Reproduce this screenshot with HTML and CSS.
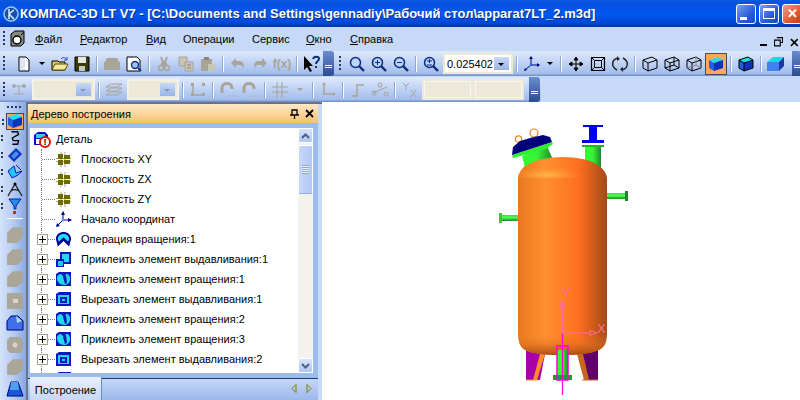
FILE: index.html
```html
<!DOCTYPE html>
<html lang="en">
<head>
    <meta charset="UTF-8">
    <title>КОМПАС-3D LT V7</title>
    <link rel="stylesheet" href="styles.css">
</head>
<body>

<svg class="defs" width="0" height="0">
    <symbol id="i-doc" viewBox="0 0 16 16"><path d="M3 1h7l3 3v11H3z" fill="#fff" stroke="#000"/><path d="M4 2h5v12H4z" fill="#dce8fa"/></symbol>
    <symbol id="i-open" viewBox="0 0 18 16"><path d="M1 14V5h6l1 1h6v8z" fill="#e8c860" stroke="#000"/><path d="M1 14l3-6h13l-3 6z" fill="#f4e8a0" stroke="#5a5000"/><path d="M10 3c2-2 4-2 5 0" fill="none" stroke="#2040c0"/><path d="M16 1v3h-3" fill="none" stroke="#2040c0"/></symbol>
    <symbol id="i-save" viewBox="0 0 16 16"><path d="M1 1h14v14H1z" fill="#3a3a10" stroke="#000"/><path d="M4 1h8v6H4z" fill="#e8e8d8"/><path d="M5 10h6v5H5z" fill="#c8c8b8"/></symbol>
    <symbol id="i-print" viewBox="0 0 18 16"><path d="M4 2h10l3 5v7H1V7z" fill="#a8a498"/></symbol>
    <symbol id="i-preview" viewBox="0 0 16 16"><path d="M1 1h10l3 3v11H1z" fill="#fff" stroke="#000"/><circle cx="9" cy="9" r="3.5" fill="#9cc4f0" stroke="#103090" stroke-width="1.4"/><path d="M12 12l3 3" stroke="#103090" stroke-width="2"/></symbol>
    <symbol id="i-cut" viewBox="0 0 12 16"><path d="M3 1l3 8 3-8M3 9l3-3 3 3" fill="none" stroke="#a8a498" stroke-width="2"/><circle cx="3" cy="12" r="2.4" fill="none" stroke="#a8a498" stroke-width="1.5"/><circle cx="9" cy="12" r="2.4" fill="none" stroke="#a8a498" stroke-width="1.5"/></symbol>
    <symbol id="i-copy" viewBox="0 0 16 16"><path d="M1 1h8v9H1z" fill="#c8c4b8" stroke="#a8a498"/><path d="M7 6h8v9H7z" fill="#c8c4b8" stroke="#a8a498"/><path d="M9 9h4M9 12h4" stroke="#8a867c"/></symbol>
    <symbol id="i-paste" viewBox="0 0 16 16"><path d="M1 3h11v12H1z" fill="#a8a498"/><path d="M4 1h5v3H4z" fill="#8a867c"/><path d="M8 8h7v7H8z" fill="#c8c4b8"/></symbol>
    <symbol id="i-undo" viewBox="0 0 16 14"><path d="M6 1L1 6l5 5V8h4c2 0 3 1 3 4 2-5 0-8-4-8H6z" fill="#a8a498"/></symbol>
    <symbol id="i-redo" viewBox="0 0 16 14"><path d="M10 1l5 5-5 5V8H6c-2 0-3 1-3 4-2-5 0-8 4-8h3z" fill="#a8a498"/></symbol>
    <symbol id="i-help" viewBox="0 0 18 18"><path d="M1 1v14l3-3 3 5 2-1-3-5h4z" fill="#000"/><path d="M10 4c1-3 6-3 6 0 0 2-3 2-3 5" fill="none" stroke="#103080" stroke-width="2"/><path d="M12 11h2v2h-2z" fill="#103080"/></symbol>
    <symbol id="i-zoom" viewBox="0 0 16 16"><circle cx="6.500" cy="6.500" r="5" fill="#b8d8f8" stroke="#102880" stroke-width="1.500"/><path d="M10 10l5 5" stroke="#102880" stroke-width="2.400"/></symbol>
    <symbol id="i-zoomin" viewBox="0 0 16 16"><use href="#i-zoom"/><path d="M4 6.500h5M6.500 4v5" stroke="#102880"/></symbol>
    <symbol id="i-zoomout" viewBox="0 0 16 16"><use href="#i-zoom"/><path d="M4 6.500h5" stroke="#102880"/></symbol>
    <symbol id="i-zoomfit" viewBox="0 0 16 16"><use href="#i-zoom"/><path d="M4 5h5M6.500 3v4M4 9h5" stroke="#102880"/></symbol>
    <symbol id="i-axes" viewBox="0 0 18 16"><path d="M8 1v8H16M8 9l-6 5" fill="none" stroke="#000080"/><path d="M8 0l-2 3h4zM17 9l-3-2v4zM1 15l1-3 2 2z" fill="#000080"/><path d="M7 8h2v2H7z" fill="#2060ff"/></symbol>
    <symbol id="i-move" viewBox="0 0 16 16"><path d="M8 1v14M1 8h14M8 1L6 4h4zM8 15l-2-3h4zM1 8l3-2v4zM15 8l-3-2v4z" fill="#000" stroke="#000"/></symbol>
    <symbol id="i-frame" viewBox="0 0 16 16"><path d="M1.500 1.500h13v13h-13z" fill="none" stroke="#000" stroke-width="1.200"/><path d="M4.500 4.500h7v7h-7zM1.500 1.500l3 3M14.500 1.500l-3 3M1.500 14.500l3-3M14.500 14.500l-3-3" fill="none" stroke="#000"/></symbol>
    <symbol id="i-rotate" viewBox="0 0 18 16"><path d="M7 2C3 3 1 6 2 10c1 2 2 3 4 4M11 14c4-1 6-4 5-8-1-2-2-3-4-4" fill="none" stroke="#222" stroke-width="1.500"/><path d="M6 0v5l3-2zM12 16v-5l-3 2z" fill="#222"/></symbol>
    <symbol id="i-wire" viewBox="0 0 16 16"><path d="M1 4l9-3 5 3v8l-9 3-5-3zM6 7l9-3M6 7v8M6 7L1 4" fill="none" stroke="#000"/></symbol>
    <symbol id="i-wirehid" viewBox="0 0 16 16"><use href="#i-wire"/><path d="M1 12l9-3 5 3M10 1v8" fill="none" stroke="#000"/></symbol>
    <symbol id="i-wiregrey" viewBox="0 0 16 16"><use href="#i-wire"/><path d="M1 12l9-3 5 3M10 1v8" fill="none" stroke="#8a867c"/></symbol>
    <symbol id="i-cube" viewBox="0 0 16 16"><path d="M1 4l9-3 5 3-9 3z" fill="#20e0e8"/><path d="M1 4l5 3v8l-5-3z" fill="#2060e0"/><path d="M6 7l9-3v8l-9 3z" fill="#1030c0"/></symbol>
    <symbol id="i-cubeline" viewBox="0 0 16 16"><use href="#i-cube"/><path d="M1 4l9-3 5 3v8l-9 3-5-3zM6 7l9-3M6 7v8M6 7L1 4" fill="none" stroke="#000"/></symbol>
    <symbol id="i-solid" viewBox="0 0 18 16"><path d="M0 6l6-5h11L12 6z" fill="#20d8e0"/><path d="M0 6h12v9H0z" fill="#4080f0"/><path d="M12 6l5-5v9l-5 5z" fill="#1838a8"/></symbol>
    <symbol id="i-node" viewBox="0 0 16 16"><path d="M1 4h14M8 4v8M3 12h10M3 2v4M13 2v4" fill="none" stroke="#a8a498"/><circle cx="3" cy="4" r="1.500" fill="none" stroke="#a8a498"/><circle cx="13" cy="4" r="1.500" fill="none" stroke="#a8a498"/></symbol>
    <symbol id="i-layers" viewBox="0 0 18 16"><path d="M1 5l5-3h11l-5 3zM1 9l5-3h11l-5 3zM1 13l5-3h11l-5 3z" fill="none" stroke="#a8a498"/></symbol>
    <symbol id="i-rect" viewBox="0 0 16 16"><path d="M3 2v11h11" fill="none" stroke="#a8a498" stroke-width="1.500"/><path d="M1 1h3v3H1zM12 11h3v3h-3zM12 1h3v3h-3zM1 11h3v3H1z" fill="#a8a498"/></symbol>
    <symbol id="i-magnet" viewBox="0 0 18 16"><path d="M3 11V6c0-6 10-6 10 0v1" fill="none" stroke="#a8a498" stroke-width="3"/><path d="M10 14h1M13 14h1M16 14h1" stroke="#a8a498"/></symbol>
    <symbol id="i-grid" viewBox="0 0 16 16"><path d="M0 5h16M0 10h16M5 0v16M10 0v16" stroke="#a8a498" fill="none"/></symbol>
    <symbol id="i-corner" viewBox="0 0 16 16"><path d="M4 1v11h11" fill="none" stroke="#a8a498" stroke-width="1.500"/><path d="M4 0L2 3h4zM16 12l-3-2v4z" fill="#a8a498"/></symbol>
    <symbol id="i-step" viewBox="0 0 16 16"><path d="M2 14h5V3h7" fill="none" stroke="#a8a498" stroke-width="1.500"/></symbol>
    <symbol id="i-link" viewBox="0 0 18 16"><path d="M2 11l14-6" stroke="#a8a498"/><circle cx="9" cy="3" r="2" fill="none" stroke="#a8a498"/><circle cx="3" cy="11" r="2" fill="none" stroke="#a8a498"/><circle cx="15" cy="12" r="2" fill="none" stroke="#a8a498"/></symbol>
    <symbol id="i-yx" viewBox="0 0 16 16"><path d="M1 1l3 3 3-3M4 4v4M9 8l5 7M14 8l-5 7" fill="none" stroke="#a8a498"/></symbol>
    <symbol id="i-plane" viewBox="0 0 17 17"><path d="M1 7.500h15M1 10.500h15M6 1v15M10 1v15" stroke="#a8a488"/><path d="M3 3h5v5H3zM9 4h6v4H9zM3 9h5v5H3zM9 9h6v4H9z" fill="#6e6a00"/></symbol>
    <symbol id="i-origin" viewBox="0 0 17 17"><path d="M8 1v8h8M8 9l-6 6" fill="none" stroke="#000080"/><path d="M8 0L6 4h4zM17 9l-4-2v4zM1 16l1-4 3 3z" fill="#000080"/><circle cx="8" cy="9" r="1.500" fill="#40a0ff"/></symbol>
    <symbol id="i-part" viewBox="0 0 16 17"><path d="M1 4l4-3h7l3 3v10H1z" fill="#0808c0"/><path d="M3 3h9v4H3z" fill="#20d8e8"/><path d="M3 8h6v5H3z" fill="#fff"/></symbol>
    <symbol id="i-rev" viewBox="0 0 18 17"><path d="M1 8c0-10 16-10 16 0l-2 8-6-6-6 6z" fill="#000090"/><path d="M3 8c0-7 12-7 12 0l-1 3-5-5-5 5z" fill="#20e0f8"/></symbol>
    <symbol id="i-ext" viewBox="0 0 17 17"><path d="M5 1h11v12H5z" fill="#0818c0"/><path d="M7 3h7v8H7z" fill="#20d8f0"/><path d="M1 8h8v8H1z" fill="#0818c0"/><path d="M3 10h5v5H3z" fill="#20c8f0"/></symbol>
    <symbol id="i-revadd" viewBox="0 0 17 17"><path d="M1 3l3-2h12v14H1z" fill="#0818c0"/><path d="M2 7c0-3 2-4 4-4l3 3 2-3c3 0 4 2 4 5 0 4-3 6-6 6-4 0-7-3-7-7z" fill="#20d8f0"/><path d="M8 6l3-2 1 8-2 1z" fill="#0818c0"/></symbol>
    <symbol id="i-cutext" viewBox="0 0 17 17"><path d="M1 3l3-2h12v14H1z" fill="#0818c0"/><path d="M3 4h11v9H3z" fill="#20d8f0"/><path d="M5 6h7v6H5z" fill="#0818c0"/><path d="M7 8h3v2H7z" fill="#20d8f0"/></symbol>
    <symbol id="i-gshape" viewBox="0 0 16 16"><path d="M1 6l5-5h9v9l-5 5H1z" fill="#aaa69a"/></symbol>
</svg>

<header class="titlebar">
    <svg class="app-logo" width="16" height="16" viewBox="0 0 16 16"><circle cx="8" cy="8" r="7" fill="#1450a8" stroke="#9cc8f0" stroke-width="1.500"/><path d="M6 3v10M6 8l5-4M6 8l5 5" stroke="#dceeff" stroke-width="1.500" fill="none"/></svg>
    <span class="title-text">КОМПАС-3D LT V7 - [C:\Documents and Settings\gennadiy\Рабочий стол\apparat7LT_2.m3d]</span>
    <div class="win-buttons">
        <div class="win-btn"><span class="glyph-min"></span></div>
        <div class="win-btn"><span class="glyph-max"></span></div>
        <div class="win-btn close">✕</div>
    </div>
</header>

<nav class="menubar">
    <span class="grip"></span>
    <svg class="doc-icon" width="17" height="18" viewBox="0 0 17 18"><path d="M2 4l4-3h9v12l-3 3H2z" fill="#8a8a80" stroke="#000"/><circle cx="8" cy="10" r="4" fill="#fff" stroke="#000" stroke-width="1.500"/><path d="M12 5l3-3" stroke="#000"/></svg>
    <ul class="menu">
        <li class="w-45"><u>Ф</u>айл</li>
        <li class="w-66"><u>Р</u>едактор</li>
        <li class="w-37"><u>В</u>ид</li>
        <li class="w-69">Операции</li>
        <li class="w-54">Сервис</li>
        <li class="w-44"><u>О</u>кно</li>
        <li><u>С</u>правка</li>
    </ul>
    <div class="mdi-buttons">
        <span class="mdi-min"></span>
        <svg width="10" height="10" viewBox="0 0 10 10"><path d="M3 .5h6v5H7M.5 3h6v6h-6z" fill="none" stroke="#000" stroke-width="1.200"/></svg>
        <svg width="9" height="9" viewBox="0 0 9 9"><path d="M1 1l7 7M8 1L1 8" stroke="#000" stroke-width="1.600"/></svg>
    </div>
</nav>

<div class="toolrow row-std">
    <span class="grip"></span>
    <span class="tool t-first"><svg width="16" height="16"><use href="#i-doc"/></svg></span>
    <span class="caret"></span>
    <span class="tool"><svg width="18" height="16"><use href="#i-open"/></svg></span>
    <span class="tool"><svg width="16" height="16"><use href="#i-save"/></svg></span>
    <span class="sep"></span>
    <span class="tool"><svg width="18" height="16"><use href="#i-print"/></svg></span>
    <span class="tool"><svg width="16" height="16"><use href="#i-preview"/></svg></span>
    <span class="sep"></span>
    <span class="tool"><svg width="12" height="16"><use href="#i-cut"/></svg></span>
    <span class="tool"><svg width="16" height="16"><use href="#i-copy"/></svg></span>
    <span class="tool"><svg width="16" height="16"><use href="#i-paste"/></svg></span>
    <span class="sep"></span>
    <span class="tool"><svg width="16" height="14"><use href="#i-undo"/></svg></span>
    <span class="tool"><svg width="16" height="14"><use href="#i-redo"/></svg></span>
    <span class="tool fx">f(x)</span>
    <span class="sep"></span>
    <span class="tool"><svg width="18" height="18"><use href="#i-help"/></svg></span>
    <span class="chevron"></span>
    <span class="grip"></span>
    <span class="tool"><svg width="16" height="16"><use href="#i-zoom"/></svg></span>
    <span class="tool"><svg width="16" height="16"><use href="#i-zoomin"/></svg></span>
    <span class="tool"><svg width="16" height="16"><use href="#i-zoomout"/></svg></span>
    <span class="sep"></span>
    <span class="tool"><svg width="16" height="16"><use href="#i-zoomfit"/></svg></span>
    <div class="scale-combo"><span class="scale-value">0.025402</span><span class="combo-btn dark"></span></div>
    <span class="sep"></span>
    <span class="tool"><svg width="18" height="16"><use href="#i-axes"/></svg></span>
    <span class="caret"></span>
    <span class="sep"></span>
    <span class="tool"><svg width="16" height="16"><use href="#i-move"/></svg></span>
    <span class="tool"><svg width="16" height="16"><use href="#i-frame"/></svg></span>
    <span class="tool"><svg width="18" height="16"><use href="#i-rotate"/></svg></span>
    <span class="sep"></span>
    <span class="tool"><svg width="16" height="16"><use href="#i-wire"/></svg></span>
    <span class="tool"><svg width="16" height="16"><use href="#i-wirehid"/></svg></span>
    <span class="tool"><svg width="16" height="16"><use href="#i-wiregrey"/></svg></span>
    <span class="tool active"><svg width="16" height="16"><use href="#i-cube"/></svg></span>
    <span class="sep"></span>
    <span class="tool"><svg width="16" height="16"><use href="#i-cubeline"/></svg></span>
    <span class="sep"></span>
    <span class="tool"><svg width="18" height="16"><use href="#i-solid"/></svg></span>
    <span class="chevron end"></span>
</div>

<div class="toolrow row-params">
    <span class="grip"></span>
    <span class="tool"><svg width="16" height="16"><use href="#i-node"/></svg></span>
    <div class="combo c-63"><span class="combo-btn"></span></div>
    <span class="sep"></span>
    <span class="tool"><svg width="18" height="16"><use href="#i-layers"/></svg></span>
    <div class="combo c-52"><span class="combo-btn"></span></div>
    <span class="sep"></span>
    <span class="tool"><svg width="16" height="16"><use href="#i-rect"/></svg></span>
    <span class="sep"></span>
    <span class="tool"><svg width="18" height="16"><use href="#i-magnet"/></svg></span>
    <span class="tool"><svg width="18" height="16"><use href="#i-magnet"/></svg></span>
    <span class="sep"></span>
    <span class="tool"><svg width="16" height="16"><use href="#i-grid"/></svg></span>
    <span class="caret grey"></span>
    <span class="sep"></span>
    <span class="tool"><svg width="16" height="16"><use href="#i-corner"/></svg></span>
    <span class="sep"></span>
    <span class="tool"><svg width="16" height="16"><use href="#i-step"/></svg></span>
    <span class="tool"><svg width="18" height="16"><use href="#i-link"/></svg></span>
    <span class="sep"></span>
    <span class="tool"><svg width="16" height="16"><use href="#i-yx"/></svg></span>
    <div class="fields"><span class="field"></span><span class="field"></span></div>
    <span class="chevron"></span>
</div>

<main class="workspace">
    <aside class="sidebar">
        <span class="grip-h"></span>
        <span class="side-tool active"><svg width="16" height="16"><use href="#i-cube"/></svg></span>
        <span class="side-tool"><svg width="14" height="16" viewBox="0 0 14 18"><path d="M3 2h7l1 3-7 4 1 3h6l-1 4H4" fill="none" stroke="#000" stroke-width="1.500"/></svg></span>
        <span class="side-tool"><svg width="16" height="16" viewBox="0 0 16 16"><path d="M1 9l8-8 6 6-8 8z" fill="#1030c0"/><path d="M4 9l5-5 3 3-5 5z" fill="#4090f0"/></svg></span>
        <span class="side-tool"><svg width="16" height="16" viewBox="0 0 16 16"><path d="M1 7l4 7 6-3 4-4-6 2-2-7z" fill="#20c8f0" stroke="#0818c0"/><path d="M9 1l5 5" stroke="#0818c0"/></svg></span>
        <span class="side-tool"><svg width="16" height="16" viewBox="0 0 16 16"><path d="M1 15L8 3l7 12M4 10c3-2 5-2 8 0" fill="none" stroke="#222" stroke-width="1.300"/><circle cx="8" cy="3" r="1.500" fill="#000"/></svg></span>
        <span class="side-tool"><svg width="14" height="16" viewBox="0 0 14 16"><path d="M1 1h12L8 8v3H6V8z" fill="#2090e0" stroke="#0818c0"/><path d="M5 13h3v3H5z" fill="#e02020"/></svg></span>
        <span class="side-sep"></span>
        <span class="side-tool big"><svg width="18" height="18"><use href="#i-gshape"/></svg></span>
        <span class="side-tool big"><svg width="18" height="18"><use href="#i-gshape"/></svg></span>
        <span class="side-tool big"><svg width="18" height="18"><use href="#i-gshape"/></svg></span>
        <span class="side-tool big"><svg width="16" height="16" viewBox="0 0 16 16"><path d="M0 0h16v16H0z" fill="#aaa69a"/><path d="M6 6h5v4H6z" fill="#d8d4c8"/></svg></span>
        <span class="side-tool big"><svg width="18" height="18" viewBox="0 0 18 18"><path d="M1 7l4-5h7l5 5v9H1z" fill="#4070e8" stroke="#000080"/><path d="M10 2l6 5-5 2z" fill="#a8d8f8"/></svg></span>
        <span class="side-tool big"><svg width="16" height="16" viewBox="0 0 16 16"><path d="M3 0h10l3 3v10l-3 3H3l-3-3V3z" fill="#aaa69a"/><circle cx="8" cy="8" r="2.500" fill="#d8d4c8"/></svg></span>
        <span class="side-tool big"><svg width="18" height="18"><use href="#i-gshape"/></svg></span>
        <span class="side-tool big"><svg width="18" height="18" viewBox="0 0 18 18"><path d="M1 16L5 2h7l5 14z" fill="#1858d8" stroke="#000080"/><path d="M5 2h7l1 8H4z" fill="#50a0f0"/></svg></span>
    </aside>

    <section class="panel">
        <div class="panel-head">
            <span class="panel-title">Дерево построения</span>
            <svg width="9" height="10" viewBox="0 0 9 10"><path d="M2 1h5v5H2zM0 6h9M4.500 6v4" fill="none" stroke="#000" stroke-width="1.300"/></svg>
            <svg width="9" height="9" viewBox="0 0 9 9"><path d="M1 1l7 7M8 1L1 8" stroke="#000" stroke-width="1.800"/></svg>
        </div>
        <div class="panel-body">
            <ul class="tree">
                <li class="tree-row root">
                    <span class="root-icon"><svg width="16" height="17"><use href="#i-part"/></svg><span class="warn">!</span></span>
                    <span class="label root-label">Деталь</span>
                </li>
                <li class="tree-row"><span class="guide"></span><svg width="17" height="17"><use href="#i-plane"/></svg><span class="label">Плоскость XY</span></li>
                <li class="tree-row"><span class="guide"></span><svg width="17" height="17"><use href="#i-plane"/></svg><span class="label">Плоскость ZX</span></li>
                <li class="tree-row"><span class="guide"></span><svg width="17" height="17"><use href="#i-plane"/></svg><span class="label">Плоскость ZY</span></li>
                <li class="tree-row"><span class="guide"></span><svg width="17" height="17"><use href="#i-origin"/></svg><span class="label">Начало координат</span></li>
                <li class="tree-row"><span class="guide"><span class="plus"></span></span><svg width="17" height="17"><use href="#i-rev"/></svg><span class="label">Операция вращения:1</span></li>
                <li class="tree-row"><span class="guide"><span class="plus"></span></span><svg width="17" height="17"><use href="#i-ext"/></svg><span class="label">Приклеить элемент выдавливания:1</span></li>
                <li class="tree-row"><span class="guide"><span class="plus"></span></span><svg width="17" height="17"><use href="#i-revadd"/></svg><span class="label">Приклеить элемент вращения:1</span></li>
                <li class="tree-row"><span class="guide"><span class="plus"></span></span><svg width="17" height="17"><use href="#i-cutext"/></svg><span class="label">Вырезать элемент выдавливания:1</span></li>
                <li class="tree-row"><span class="guide"><span class="plus"></span></span><svg width="17" height="17"><use href="#i-revadd"/></svg><span class="label">Приклеить элемент вращения:2</span></li>
                <li class="tree-row"><span class="guide"><span class="plus"></span></span><svg width="17" height="17"><use href="#i-revadd"/></svg><span class="label">Приклеить элемент вращения:3</span></li>
                <li class="tree-row"><span class="guide"><span class="plus"></span></span><svg width="17" height="17"><use href="#i-cutext"/></svg><span class="label">Вырезать элемент выдавливания:2</span></li>
                <li class="tree-row"><span class="guide"></span><svg width="17" height="17"><use href="#i-revadd"/></svg></li>
            </ul>
            <div class="scrollbar">
                <span class="sb-btn"><svg width="9" height="6" viewBox="0 0 9 6"><path d="M1 5l3.500-3.500L8 5" fill="none" stroke="#4d6185" stroke-width="2"/></svg></span>
                <span class="sb-thumb"><span class="sb-lines"></span></span>
                <span class="sb-btn sb-down"><svg width="9" height="6" viewBox="0 0 9 6"><path d="M1 1l3.500 3.500L8 1" fill="none" stroke="#4d6185" stroke-width="2"/></svg></span>
            </div>
        </div>
        <div class="panel-tabs">
            <span class="tab">Построение</span>
            <span class="tab-arrows">
                <svg width="6" height="9" viewBox="0 0 6 9"><path d="M5 .5v8L1 4.500z" fill="none" stroke="#7c8000"/></svg>
                <svg width="6" height="9" viewBox="0 0 6 9"><path d="M1 .5v8l4-4z" fill="none" stroke="#7c8000"/></svg>
            </span>
        </div>
    </section>

    <div class="viewport">
        <svg class="model" width="478" height="298" viewBox="322 102 478 298">
            <defs>
                <linearGradient id="g-body" x1="0" x2="1" y1="0" y2="0">
                    <stop offset="0" stop-color="#e8781e"/>
                    <stop offset=".3" stop-color="#ff9030"/>
                    <stop offset=".68" stop-color="#ff6e20"/>
                    <stop offset="1" stop-color="#a24a18"/>
                </linearGradient>
                <linearGradient id="g-bottom" x1="0" x2="0" y1="0" y2="1">
                    <stop offset="0" stop-color="#ff8a2c" stop-opacity="0"/>
                    <stop offset="1" stop-color="#a84c10"/>
                </linearGradient>
                <linearGradient id="g-green" x1="0" x2="1" y1="0" y2="0">
                    <stop offset="0" stop-color="#30ff30"/>
                    <stop offset=".5" stop-color="#38f038"/>
                    <stop offset="1" stop-color="#1a8a28"/>
                </linearGradient>
                <linearGradient id="g-pipe" x1="0" x2="0" y1="0" y2="1">
                    <stop offset="0" stop-color="#30e030"/>
                    <stop offset=".4" stop-color="#50ff50"/>
                    <stop offset="1" stop-color="#1a8a28"/>
                </linearGradient>
                <radialGradient id="g-dome" cx=".33" cy=".85" r=".4">
                    <stop offset="0" stop-color="#ffb848"/>
                    <stop offset="1" stop-color="#ff8c2c" stop-opacity="0"/>
                </radialGradient>
            </defs>
            <path d="M526 347L545 354 540 380H526z" fill="#a800a8"/>
            <path d="M540 354L545 354 537 380H533z" fill="#ff8c28"/>
            <path d="M526 380h12" stroke="#ff8c28"/>
            <path d="M598 347L582 354 586 380H598z" fill="#64006c"/>
            <path d="M577 354L583 354 589 380H584z" fill="#c8681c"/>
            <path d="M582 380h16" stroke="#c8681c"/>

            <path d="M585 145h16v22h-16z" fill="url(#g-green)"/>
            <path d="M582 145h22v2h-22z" fill="#20b030"/>
            <path d="M583 125h20v2h-20zM589 127h8v13h-8zM582 140h22v3h-22z" fill="#0000f0"/>

            <circle cx="518.500" cy="139" r="3.200" fill="none" stroke="#f08020" stroke-width="1.200"/>
            <circle cx="534" cy="133" r="4" fill="none" stroke="#f08020" stroke-width="1.200"/>
            <path d="M522 156l25-10 6 14-26 16z" fill="url(#g-green)"/>
            <path d="M513 158l-1-3 40-13 1 2-7 5z" fill="#30f030"/>
            <path d="M512 155l1-8 7-6 10-3 13-3 7 2 2 5z" fill="#00007c"/>

            <path d="M607 193h19v6h-19z" fill="url(#g-pipe)"/>
            <path d="M625 191h3v10h-3z" fill="#1a8a28"/>
            <path d="M499 215h19v6h-19z" fill="url(#g-pipe)"/>
            <path d="M499 213h3v10h-3z" fill="#30d030"/>

            <path d="M518 178c0-3 3-9 7-12 10-6 24-9 37-9 15 0 30 3 37 9 5 3 8 9 8 12v155c0 8-2 14-8 17-8 4-22 5-37 5-16 0-30-1-37-5-5-3-7-9-7-17z" fill="url(#g-body)"/>
            <path d="M518 178c0-3 3-9 7-12 10-6 24-9 37-9 15 0 30 3 37 9 5 3 8 9 8 12z" fill="url(#g-dome)"/>
            <path d="M518 334h89c0 8-2 13-8 16-8 4-22 5-37 5-16 0-30-1-37-5-5-3-7-8-7-16z" fill="url(#g-bottom)"/>

            <path d="M557 350h11v27h-11z" fill="url(#g-green)"/>
            <path d="M553 375h19v5h-19z" fill="#1c9c30"/>
            <path d="M557 346h11v34h-11z" fill="none" stroke="#ff00d8" stroke-width="1.500"/>
            <path d="M562.500 333v62" stroke="#ff00d8" stroke-width="1.200"/>
            <path d="M562.500 300v33H590" fill="none" stroke="#ff6e96" stroke-width="1.200"/>
            <path d="M562.500 300l-2.500 7h5zM597 333l-7-2.500v5z" fill="none" stroke="#ff6e96"/>
            <text class="axis-label" x="562" y="297">Y</text>
            <text class="axis-label" x="597" y="333">X</text>
        </svg>
    </div>
</main>

</body>
</html>
```

FILE: styles.css
```css
* {
    box-sizing: border-box;
}
html, body {
    margin: 0;
    padding: 0;
    width: 800px;
    height: 400px;
    overflow: hidden;
    background-color: #c6d9f6;
    font-family: "Liberation Sans", Arial, sans-serif;
    font-size: 11px;
    color: #000;
}
ul {
    list-style: none;
    margin: 0;
    padding: 0;
}
.defs {
    position: absolute;
}

/* title bar */
.titlebar {
    height: 27px;
    display: flex;
    align-items: center;
    padding-left: 3px;
    background: linear-gradient(to bottom, #0a5ce0 0%, #0a50e0 10%, #0058f0 50%, #0048d8 85%, #0036a8 100%);
}
.app-logo {
    flex: none;
    margin-right: 1px;
}
.title-text {
    flex: 1;
    color: #fff;
    font-family: "Liberation Sans", Arial, sans-serif;
    font-weight: bold;
    font-size: 13px;
    white-space: nowrap;
    text-shadow: 1px 1px 0 #0a2f90;
}
.win-buttons {
    display: flex;
    gap: 3px;
    width: 64px;
    flex: none;
}
.win-btn {
    width: 20px;
    height: 20px;
    flex: none;
    border: 1px solid #fff;
    border-radius: 3px;
    background: linear-gradient(135deg, #7aa0f0, #2a5cd8 60%, #1c48c0);
    display: flex;
    align-items: center;
    justify-content: center;
    color: #fff;
    font-size: 13px;
    font-weight: bold;
}
.win-btn.close {
    background: linear-gradient(135deg, #f0a080, #e05a30 60%, #c03c18);
}
.glyph-min {
    width: 7px;
    height: 3px;
    background-color: #fff;
    margin: 9px 6px 0 0;
}
.glyph-max {
    width: 12px;
    height: 11px;
    border: 1px solid #fff;
    border-top-width: 3px;
}

/* menu */
.menubar {
    height: 24px;
    display: flex;
    align-items: center;
    background-color: #c6d9f6;
}
.grip {
    flex: none;
    width: 2px;
    height: 16px;
    margin: 0 3px;
    background: repeating-linear-gradient(to bottom, #2a3a5c 0, #2a3a5c 2px, transparent 2px, transparent 4px);
}
.chevron + .grip {
    margin-right: 5px;
}
.doc-icon {
    margin: 0 9px 0 1px;
    flex: none;
}
.menu {
    display: flex;
    flex: 1;
}
.w-45 { width: 45px; }
.w-66 { width: 66px; }
.w-37 { width: 37px; }
.w-69 { width: 69px; }
.w-54 { width: 54px; }
.w-44 { width: 44px; }
.mdi-buttons {
    display: flex;
    align-items: center;
    gap: 7px;
    padding-right: 1px;
    margin-top: 6px;
    width: 40px;
}
.mdi-min {
    width: 7px;
    height: 2px;
    background-color: #000;
    margin-top: 5px;
}

/* toolbars */
.toolrow {
    height: 25px;
    display: flex;
    align-items: center;
    margin-bottom: 1px;
    background: linear-gradient(to bottom, #dfe9fb 0%, #c4d6f6 40%, #a3bdec 90%, #6d89c0 100%);
}
.row-std {
    width: 800px;
}
.row-params {
    width: 541px;
    border-top-right-radius: 4px;
    border-bottom-right-radius: 4px;
}
.tool {
    flex: none;
    width: 22px;
    height: 22px;
    display: flex;
    align-items: center;
    justify-content: center;
}
.t-first {
    margin-left: 5px;
}
.tool.active {
    background-color: #ffa85c;
    border: 1px solid #3c4a6c;
}
.fx {
    color: #a8a498;
    font-weight: bold;
    font-size: 12px;
}
.sep {
    flex: none;
    width: 2px;
    height: 16px;
    margin: 0 3px;
    background-color: #fff;
    border-left: 1px solid #8ea6d2;
}
.caret {
    flex: none;
    width: 0;
    height: 0;
    margin: 0 4px;
    border-top: 3px solid #000;
    border-left: 3px solid transparent;
    border-right: 3px solid transparent;
}
.caret.grey {
    margin: 0 6px;
    border-top-color: #a8a498;
}
.chevron {
    flex: none;
    width: 11px;
    height: 25px;
    margin-right: 2px;
    position: relative;
    background: linear-gradient(to bottom, #6a8cd0, #2c4c90);
    border-radius: 0 3px 3px 0;
}
.chevron::after {
    content: "";
    position: absolute;
    left: 2px;
    bottom: 5px;
    width: 7px;
    height: 6px;
    background: linear-gradient(to bottom, #fff 0, #fff 1px, transparent 1px, transparent 2px, #fff 2px, #fff 3px, transparent 3px);
}
.chevron.end {
    margin: 0 0 0 5px;
    width: 9px;
}
.scale-combo {
    flex: none;
    width: 70px;
    height: 21px;
    display: flex;
    align-items: center;
    margin-left: 1px;
    padding: 2px;
    background-color: #fff;
    border: 2px solid #ece9d8;
    font-size: 11px;
}
.scale-value {
    flex: 1;
}
.combo {
    flex: none;
    height: 21px;
    padding: 2px;
    margin-left: 2px;
    display: flex;
    justify-content: flex-end;
    background-color: #ece9d8;
    border: 2px solid #f4f2e8;
}
.c-63 { width: 63px; }
.c-52 { width: 52px; }
.combo-btn {
    flex: none;
    width: 15px;
    height: 100%;
    position: relative;
    background: linear-gradient(to bottom, #c8d8f8, #98b4e8);
}
.combo-btn::after {
    content: "";
    position: absolute;
    left: 4px;
    top: 6px;
    border-top: 3px solid #8a94ac;
    border-left: 3px solid transparent;
    border-right: 3px solid transparent;
}
.combo-btn.dark::after {
    border-top-color: #000;
}
.fields {
    flex: none;
    display: flex;
    gap: 4px;
    padding: 2px;
    width: 102px;
    height: 21px;
    margin: 0 5px 0 1px;
    background-color: #ece9d8;
}
.field {
    flex: 1;
    background-color: #ece9d8;
    border: 1px solid #f8f6ee;
}

/* main area */
.workspace {
    height: 298px;
    display: flex;
    margin-top: -1px;
}
.sidebar {
    flex: none;
    width: 26px;
    display: flex;
    flex-direction: column;
    align-items: center;
    background: linear-gradient(to right, #d4e2fa 0%, #b6ccf2 50%, #88a8e4 100%);
    padding: 4px 0 0 3px;
}
.grip-h {
    width: 16px;
    height: 2px;
    margin-bottom: 5px;
    background: repeating-linear-gradient(to right, #2a3a5c 0, #2a3a5c 2px, transparent 2px, transparent 4px);
}
.side-tool {
    flex: none;
    position: relative;
    width: 18px;
    height: 17px;
    display: flex;
    align-items: center;
    justify-content: center;
}
.side-tool:not(.big)::before {
    content: "";
    position: absolute;
    left: -5px;
    top: 5px;
    width: 2px;
    height: 6px;
    background: repeating-linear-gradient(to bottom, #2a3a5c 0, #2a3a5c 2px, transparent 2px, transparent 4px);
}
.side-tool.active {
    background-color: #ffa85c;
    border: 1px solid #3c4a6c;
}
.side-tool.big {
    height: 22px;
}
.side-sep {
    width: 16px;
    height: 2px;
    margin: 3px 0 5px;
    background-color: #fff;
}
.panel {
    flex: none;
    width: 296px;
    display: flex;
    flex-direction: column;
    padding-right: 4px;
    border-top: 2px solid #6b7486;
    border-left: 2px solid #6b7486;
}
.panel-head {
    height: 19px;
    flex: none;
    display: flex;
    align-items: center;
    gap: 6px;
    padding: 0 4px 0 3px;
    background: linear-gradient(to bottom, #fde9c8, #f8c070);
}
.panel-title {
    flex: 1;
}
.panel-body {
    flex: 1;
    min-height: 0;
    display: flex;
    padding: 5px 5px 5px 2px;
    background-color: #9cbcec;
}
.tree {
    flex: 1;
    min-width: 0;
    overflow: hidden;
    padding-top: 1px;
    background-color: #fff;
}
.tree-row {
    height: 20px;
    display: flex;
    align-items: center;
    white-space: nowrap;
}
.root {
    padding-left: 3px;
}
.root-icon {
    position: relative;
    display: flex;
    width: 20px;
}
.warn {
    position: absolute;
    left: 6px;
    top: 5px;
    width: 12px;
    height: 12px;
    border: 2px solid #e01010;
    border-radius: 50%;
    background-color: #fff;
    color: #000;
    font-size: 9px;
    font-weight: bold;
    line-height: 8px;
    text-align: center;
}
.guide {
    flex: none;
    position: relative;
    width: 14px;
    height: 20px;
    margin-left: 11px;
    border-left: 1px dotted #808080;
}
.guide::after {
    content: "";
    position: absolute;
    left: 0;
    right: 0;
    top: 10px;
    border-top: 1px dotted #808080;
}
.plus {
    position: absolute;
    z-index: 1;
    left: -5px;
    top: 5px;
    width: 11px;
    height: 11px;
    border: 1px solid #a5a092;
    background: linear-gradient(#000, #000) center / 7px 1px no-repeat, linear-gradient(#000, #000) center / 1px 7px no-repeat, #fff;
}
.label {
    margin-left: 9px;
}
.tree-row .root-label {
    margin-left: 3px;
}
.scrollbar {
    flex: none;
    width: 15px;
    display: flex;
    flex-direction: column;
    background-color: #f3f2ec;
}
.sb-btn {
    flex: none;
    height: 15px;
    display: flex;
    align-items: center;
    justify-content: center;
    background: linear-gradient(to bottom, #d8e4fb, #b0c6f4);
    border: 1px solid #fff;
    border-radius: 2px;
}
.sb-thumb {
    flex: none;
    height: 49px;
    margin-top: 2px;
    display: flex;
    align-items: center;
    justify-content: center;
    background: linear-gradient(to right, #c8d6fa, #b4c8f6);
    border: 1px solid #fff;
    border-bottom-color: #8eaee8;
    border-radius: 2px;
}
.sb-lines {
    width: 7px;
    height: 9px;
    background: repeating-linear-gradient(to bottom, #8da4d8 0, #8da4d8 1px, #eef2fc 1px, #eef2fc 2px);
}
.sb-down {
    margin-top: auto;
}
.panel-tabs {
    flex: none;
    height: 22px;
    display: flex;
    padding-left: 2px;
    border-top: 1px solid #1c3a78;
    background: linear-gradient(to bottom, #c4d6f6, #9cb8ec);
}
.tab {
    width: 72px;
    height: 23px;
    margin-top: -2px;
    padding-top: 7px;
    text-align: center;
    background: linear-gradient(to bottom, #e8f0fd, #c6d8f6);
    border-right: 1px solid #6d89c0;
}
.tab-arrows {
    margin-left: auto;
    margin-right: 6px;
    margin-top: 5px;
    display: flex;
    gap: 9px;
}
.viewport {
    flex: 1;
    min-width: 0;
    background-color: #fff;
}
.model {
    display: block;
}
.axis-label {
    fill: #ff6e96;
    font-family: "Liberation Sans", sans-serif;
    font-size: 13px;
}
```
